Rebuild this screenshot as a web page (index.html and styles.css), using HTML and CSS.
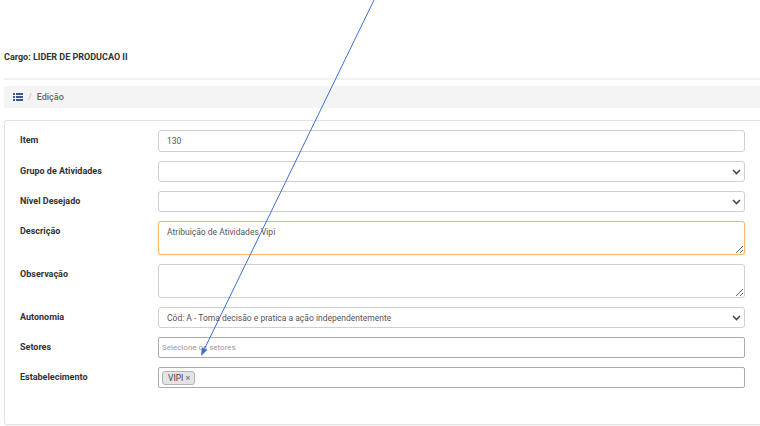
FILE: index.html
```html
<!DOCTYPE html>
<html lang="pt-BR">
<head>
<meta charset="utf-8">
<title>Edição</title>
<link rel="stylesheet" href="styles.css">
</head>
<body>
<div class="page">
  <div class="title">Cargo: LIDER DE PRODUCAO II</div>
  <div class="sep"></div>
  <div class="breadcrumb">
    <svg class="bc-icon" width="10" height="8" viewBox="0 0 10 8">
      <rect x="0" y="0" width="2" height="2"/>
      <rect x="3" y="0" width="7" height="2"/>
      <rect x="0" y="3" width="2" height="2"/>
      <rect x="3" y="3" width="7" height="2"/>
      <rect x="0" y="6" width="2" height="2"/>
      <rect x="3" y="6" width="7" height="2"/>
    </svg>
    <span class="bc-sep">/</span>
    <span class="bc-text">Edição</span>
  </div>
  <div class="card">
    <div class="form-grid">
      <div class="label">Item</div>
      <input class="control item" type="text" value="130" readonly>

      <div class="label">Grupo de Atividades</div>
      <div class="control select"><span></span><svg class="chev" width="9" height="6" viewBox="0 0 9 6"><path d="M1 1 L4.5 4.5 L8 1" fill="none" stroke="#4a4a4a" stroke-width="1.6"/></svg></div>

      <div class="label">Nível Desejado</div>
      <div class="control select"><span></span><svg class="chev" width="9" height="6" viewBox="0 0 9 6"><path d="M1 1 L4.5 4.5 L8 1" fill="none" stroke="#4a4a4a" stroke-width="1.6"/></svg></div>

      <div class="label">Descrição</div>
      <textarea class="control area focus" readonly>Atribuição de Atividades Vipi</textarea>

      <div class="label">Observação</div>
      <textarea class="control area" readonly></textarea>

      <div class="label">Autonomia</div>
      <div class="control select"><span>Cód: A - Toma decisão e pratica a ação independentemente</span><svg class="chev" width="9" height="6" viewBox="0 0 9 6"><path d="M1 1 L4.5 4.5 L8 1" fill="none" stroke="#4a4a4a" stroke-width="1.6"/></svg></div>

      <div class="label">Setores</div>
      <div class="control multi"><span class="placeholder">Selecione os setores</span></div>

      <div class="label">Estabelecimento</div>
      <div class="control multi chips"><span class="chip">VIPI <span class="chip-x">×</span></span></div>
    </div>
  </div>
</div>
<svg class="annotation" width="760" height="426" viewBox="0 0 760 426">
  <line x1="374" y1="0" x2="204.5" y2="348.8" stroke="#3f6fd1" stroke-width="1"/>
  <polygon points="201,356 207.2,350.1 201.8,347.5" fill="#3f6fd1"/>
</svg>
</body>
</html>
```
FILE: styles.css
```css
html, body {
  margin: 0;
  padding: 0;
  background: #ffffff;
  font-family: Roboto, "Liberation Sans", Arial, sans-serif;
  color: #333;
}
.page {
  padding: 51px 0 0 4px;
  width: 756px;
  height: 375px;
  overflow: hidden;
}
.title {
  font-size: 9px;
  font-weight: 700;
  line-height: 12px;
  color: #333;
}
.sep {
  height: 2px;
  background: #f1f1f1;
  margin-top: 15px;
}
.breadcrumb {
  margin-top: 6px;
  height: 22px;
  background: #f4f4f4;
  display: flex;
  align-items: center;
  padding-left: 9px;
  font-size: 9px;
  color: #666;
}
.bc-icon {
  fill: #3b5a92;
}
.bc-sep {
  color: #c4c4c4;
  margin: 0 5px 0 5px;
}
.bc-text {
  color: #666;
  font-weight: 500;
}
.card {
  margin-top: 12px;
  border: 1px solid #e2e2e2;
  border-right: none;
  border-radius: 3px 0 0 3px;
  padding: 9px 15px 36px 15px;
  box-shadow: 0 1px 1px rgba(0,0,0,0.04);
}
.form-grid {
  display: grid;
  grid-template-columns: 138px 1fr;
  row-gap: 9px;
}
.label {
  font-size: 9px;
  font-weight: 700;
  line-height: 21px;
  color: #333;
}
.control {
  box-sizing: border-box;
  width: 100%;
  height: 21px;
  margin: 0;
  border: 1px solid #d0d0d0;
  border-radius: 3px;
  background: #fff;
  font-family: Roboto, "Liberation Sans", Arial, sans-serif;
  font-size: 8.5px;
  color: #555;
  padding: 0 8px;
  outline: none;
}
.item {
  height: 22px;
}
.select {
  display: flex;
  align-items: center;
  justify-content: space-between;
  padding: 0 3px 0 8px;
}
.chev {
  flex: none;
}
.area {
  height: 34px;
  padding: 5px 8px;
  line-height: 11px;
  resize: vertical;
  display: block;
}
.focus {
  border-color: #f4bb66;
  box-shadow: 0 0 2px rgba(244, 187, 102, 0.5);
}
.multi {
  border: 1px solid #ababab;
  border-radius: 2px;
  display: flex;
  align-items: center;
  padding: 0 3px;
}
.placeholder {
  color: #9a9a9a;
  font-size: 8px;
}
.chip {
  display: inline-flex;
  align-items: center;
  height: 14px;
  box-sizing: border-box;
  padding: 0 4px 0 5px;
  background: #e4e4e4;
  border: 1px solid #b3b3b3;
  border-radius: 3px;
  font-size: 8.5px;
  color: #444;
}
.chip-x {
  color: #888;
  font-weight: 700;
  margin-left: 2px;
  font-size: 9px;
}
.annotation {
  position: absolute;
  left: 0;
  top: 0;
  pointer-events: none;
}
```
